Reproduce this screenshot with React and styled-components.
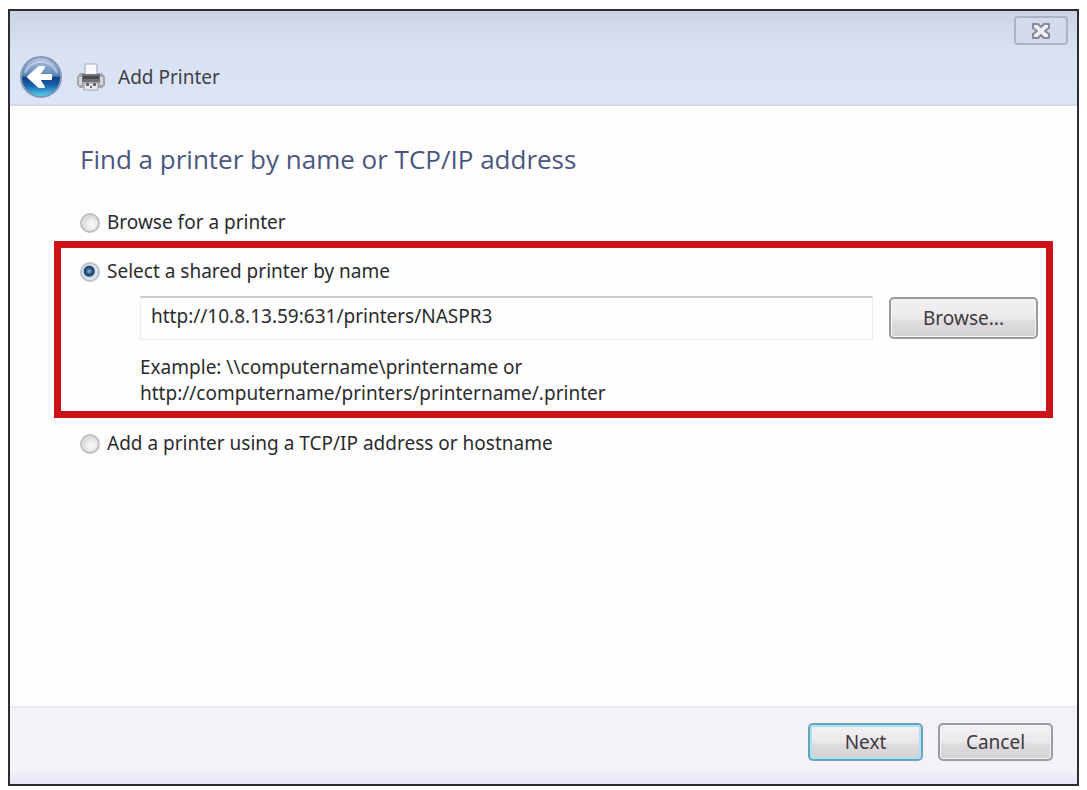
import { useState } from 'react';
import styled, { createGlobalStyle } from 'styled-components';

const GlobalStyle = createGlobalStyle`
  * {
    box-sizing: border-box;
  }

  body {
    margin: 0;
    background: #fff;
    color: #2b2b2f;
    font-family: 'Noto Sans', 'Open Sans', sans-serif;
    font-size: 19px;
    line-height: 26px;
  }
`;

const Window = styled.div`
  display: flex;
  flex-direction: column;
  min-height: calc(100vh - 13px);
  margin: 9px 8px 4px;
  border: 2px solid #2c2d33;
  background: #fefefe;
`;

const Header = styled.header`
  display: flex;
  flex-direction: column;
  gap: 10px;
  padding: 5px 9px 5px;
  border-bottom: 2px solid #d3d9e2;
  background: linear-gradient(#ccd4e4, #d9e2f3 45%, #dce5f7);
`;

const CloseButton = styled.button`
  display: flex;
  align-items: center;
  justify-content: center;
  align-self: flex-end;
  width: 54px;
  height: 29px;
  padding: 0;
  border: 2px solid #a9b5c6;
  border-radius: 4px;
  background: #d3dbea;
`;

const TitleRow = styled.div`
  display: flex;
  align-items: center;
`;

const BackButton = styled.button`
  display: flex;
  margin-right: 14px;
  padding: 0;
  border: none;
  background: none;
`;

const Title = styled.span`
  margin-left: 13px;
  color: #3d3f47;
`;

const Main = styled.main`
  flex: 1;
  padding: 35px 24px 24px 44px;
`;

const Heading = styled.h1`
  margin: 0 0 32px;
  padding-left: 26px;
  color: #4a5680;
  font-family: 'Open Sans', sans-serif;
  font-size: 26px;
  font-weight: 400;
  line-height: 36px;
`;

const Option = styled.div`
  display: flex;
  align-items: center;
  gap: 7px;
  padding-left: ${(props) => (props.$boxed ? '19px' : '26px')};
`;

const Radio = styled.input`
  appearance: none;
  width: 20px;
  height: 20px;
  margin: 2px 0 0;
  border: 2px solid #c0c0c0;
  border-radius: 50%;
  background: radial-gradient(circle at 60% 60%, #f4f4f4 20%, #cfcfcf 80%);
  box-shadow: inset 0 0 0 1px #e6e6e6;

  &:checked {
    border-color: #b9c2ca;
    background: radial-gradient(
      circle at 45% 45%,
      #8fb9dc 0,
      #2c5a8a 3px,
      #1c3d66 5px,
      #d5dee6 6px
    );
  }
`;

const Highlight = styled.section`
  margin: 6px 0 12px;
  padding: 10px 8px 5px 0;
  border: 7px solid #cc1217;
`;

const PrinterRow = styled.div`
  display: flex;
  align-items: center;
  gap: 16px;
  margin: 12px 0 14px;
  padding-left: 79px;
`;

const PrinterInput = styled.input`
  flex: 1;
  min-width: 0;
  height: 44px;
  padding: 0 10px 6px;
  border: 1px solid #ececec;
  border-top: 2px solid #cbcbcb;
  background: #fefefe;
  color: inherit;
  font: inherit;
  outline: none;
`;

const Example = styled.p`
  margin: 0;
  padding-left: 79px;
`;

const Button = styled.button`
  width: ${(props) => (props.$wide ? '149px' : '115px')};
  height: ${(props) => (props.$wide ? '42px' : '38px')};
  padding: 0;
  border: 2px solid ${(props) => (props.$primary ? '#6ba3bd' : '#9b9b9f')};
  border-radius: 5px;
  background: linear-gradient(#f3f1f3, #ebe9eb 50%, #dedcde 58%, #d3d1d3);
  box-shadow: inset 0 0 0 ${(props) => (props.$primary ? '2px #a9e3f5' : '1px #f6f5f6')};
  color: #3d3a40;
  font: inherit;
`;

const Footer = styled.footer`
  display: flex;
  justify-content: flex-end;
  gap: 15px;
  padding: 15px 24px 23px;
  border-top: 2px solid #e9eaee;
  background: linear-gradient(#f4f1f7 80%, #e6e5f5);
`;

function CloseIcon() {
  return (
    <svg width="20" height="18" viewBox="0 0 20 18" aria-hidden="true">
      <path
        d="M2 2h5l3 3 3-3h5v4l-4 3 4 3v4h-5l-3-3-3 3H2v-4l4-3-4-3z"
        fill="#eef0f6"
        stroke="#85899a"
        strokeWidth="2"
        strokeLinejoin="round"
      />
    </svg>
  );
}

function BackIcon() {
  return (
    <svg width="44" height="44" viewBox="0 0 44 44" aria-hidden="true">
      <defs>
        <linearGradient id="orb" x1="0" y1="0" x2="0" y2="1">
          <stop offset="0" stopColor="#b9c8df" />
          <stop offset="0.46" stopColor="#5b86bb" />
          <stop offset="0.52" stopColor="#123f88" />
          <stop offset="0.72" stopColor="#1a67ae" />
          <stop offset="1" stopColor="#5fd6f2" />
        </linearGradient>
      </defs>
      <circle cx="22" cy="22" r="20" fill="url(#orb)" stroke="#8795b4" strokeWidth="2" />
      <path d="M6 18a17 17 0 0 1 32 0" fill="none" stroke="#d3deee" strokeWidth="2" opacity="0.6" />
      <path
        d="M9 22 20 12h5l-5 8h12v4H20l5 8h-5z"
        fill="#fff"
        stroke="#fff"
        strokeWidth="2"
        strokeLinejoin="round"
      />
    </svg>
  );
}

function PrinterIcon() {
  return (
    <svg width="28" height="30" viewBox="0 0 28 30" aria-hidden="true">
      <path d="M3 11h22l3 4v8l-3 3H3l-3-3v-8z" fill="#a3a5ab" />
      <path d="M2 15h3v8H2zM23 15h3v8h-3z" fill="#d3d5da" />
      <path d="M8 2h12v12H8z" fill="#f7f8fb" stroke="#a4a8b2" />
      <path d="M5 12h18v8H5z" fill="#707277" />
      <path d="M6 14h16v3H6z" fill="#46484d" />
      <path d="M7 21h14v7H7z" fill="#e9eaee" stroke="#a1a3aa" />
      <path d="M9 21h3v3H9zM16 21h3v3h-3zM13 24h2v2h-2z" fill="#65676d" />
    </svg>
  );
}

export default function App() {
  const [mode, setMode] = useState('shared');
  const [printer, setPrinter] = useState(
    'http://10.8.13.59:631/printers/NASPR3'
  );

  const handleMode = (event) => {
    setMode(event.target.value);
  };

  const renderRadio = (value) => (
    <Radio
      type="radio"
      name="mode"
      id={value}
      value={value}
      checked={mode === value}
      onChange={handleMode}
    />
  );

  return (
    <>
      <GlobalStyle />
      <Window>
        <Header>
          <CloseButton type="button" aria-label="Close">
            <CloseIcon />
          </CloseButton>
          <TitleRow>
            <BackButton type="button" aria-label="Back">
              <BackIcon />
            </BackButton>
            <PrinterIcon />
            <Title>Add Printer</Title>
          </TitleRow>
        </Header>
        <Main>
          <Heading>Find a printer by name or TCP/IP address</Heading>
          <Option>
            {renderRadio('browse')}
            <label htmlFor="browse">Browse for a printer</label>
          </Option>
          <Highlight>
            <Option $boxed>
              {renderRadio('shared')}
              <label htmlFor="shared" id="shared-label">
                Select a shared printer by name
              </label>
            </Option>
            <PrinterRow>
              <PrinterInput
                type="text"
                aria-labelledby="shared-label"
                value={printer}
                onChange={(event) => setPrinter(event.target.value)}
              />
              <Button type="button" $wide>
                Browse...
              </Button>
            </PrinterRow>
            <Example>
              Example: \\computername\printername or
              <br />
              http://computername/printers/printername/.printer
            </Example>
          </Highlight>
          <Option>
            {renderRadio('tcpip')}
            <label htmlFor="tcpip">
              Add a printer using a TCP/IP address or hostname
            </label>
          </Option>
        </Main>
        <Footer>
          <Button type="button" $primary>
            Next
          </Button>
          <Button type="button">Cancel</Button>
        </Footer>
      </Window>
    </>
  );
}
